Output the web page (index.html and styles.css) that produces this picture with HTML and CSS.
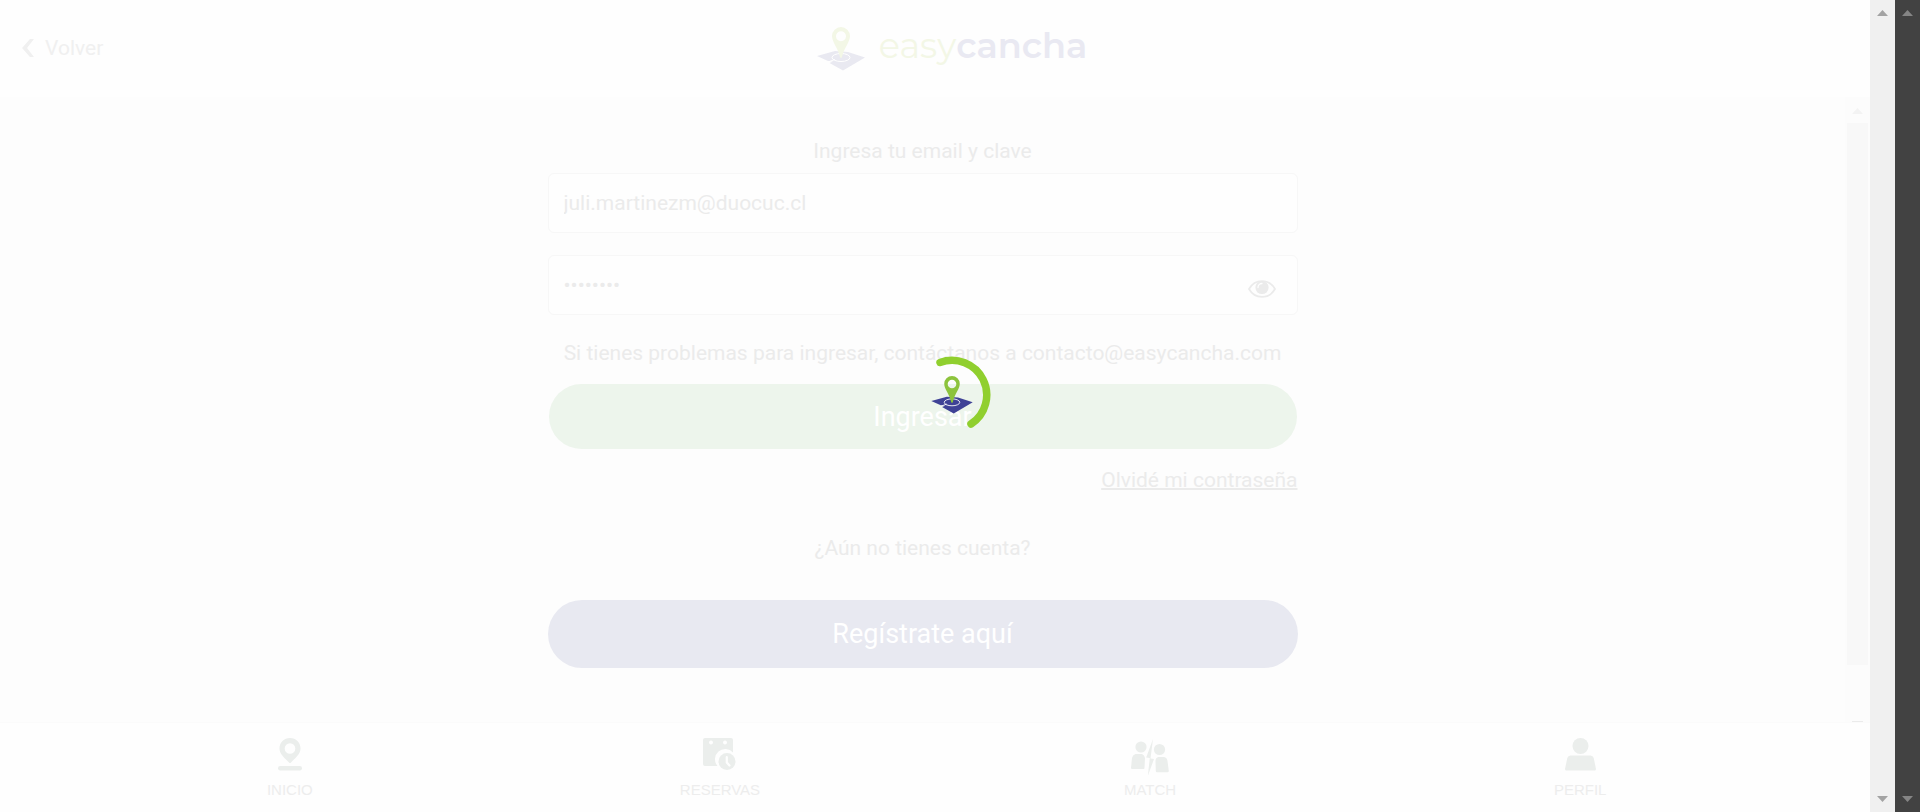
FILE: index.html
```html
<!DOCTYPE html>
<html lang="es">
<head>
<meta charset="utf-8">
<title>easycancha</title>
<link rel="stylesheet" href="styles.css">
</head>
<body>
<svg class="defs" aria-hidden="true">
  <symbol id="mark" viewBox="0 0 48 44">
    <path class="mark-map" d="M0 29 18 24 31 25 48 30.500 26 43.500 12.500 36 16 34.500 11 34Z"/>
    <path class="mark-line" d="M11 35 18 32.500M33 30.500a9 4 0 1 1-18 0 9 4 0 1 1 18 0"/>
    <path class="mark-pin" fill-rule="evenodd" d="M24 0a9 9 0 0 0-9 9c0 6 6 12 8 21q1 2 2 0c2-9 8-15 8-21a9 9 0 0 0-9-9Zm0 4.200a5 5 0 1 1 0 10 5 5 0 0 1 0-10Z"/>
  </symbol>
</svg>
<div class="window">
  <div class="app">
    <header class="header">
      <button class="back" type="button">
        <svg width="12" height="18" viewBox="0 0 12 18"><path d="M8 0h4L5 9l7 9H8L0 9Z"/></svg>
        <span>Volver</span>
      </button>
      <div class="logo">
        <svg class="mark faded" width="48" height="44"><use href="#mark"/></svg>
        <span class="wordmark"><span class="easy">easy</span><span class="cancha">cancha</span></span>
      </div>
    </header>
    <div class="body">
      <main class="content">
        <form class="form">
          <label class="label" for="email">Ingresa tu email y clave</label>
          <input class="field" id="email" type="email" value="juli.martinezm@duocuc.cl">
          <div class="password">
            <input class="field" type="password" value="12345678" aria-label="Clave">
            <button class="eye" type="button" aria-label="Mostrar clave">
              <svg width="28" height="18" viewBox="0 0 28 18"><path d="M1 9C7-1.500 21-1.500 27 9 21 19.500 7 19.500 1 9Z" fill="none" stroke="currentColor" stroke-width="1.800"/><circle cx="14" cy="7.500" r="6.600" fill="currentColor"/><path d="M10 7.500a4 4 0 0 1 4-4" fill="none" stroke="#fefefe" stroke-width="1.300" stroke-linecap="round"/></svg>
            </button>
          </div>
          <p class="help">Si tienes problemas para ingresar, contáctanos a contacto@easycancha.com</p>
          <button class="btn enter" type="button">Ingresar</button>
          <a class="forgot" href="#">Olvidé mi contraseña</a>
          <p class="question">¿Aún no tienes cuenta?</p>
          <button class="btn register" type="button">Regístrate aquí</button>
        </form>
      </main>
      <div class="bar bar-inner" aria-hidden="true">
        <svg width="11" height="6" viewBox="0 0 11 6"><path d="M5.500 0 11 6H0Z"/></svg>
        <div class="track"><div class="thumb"></div></div>
        <div class="dash"></div>
      </div>
    </div>
    <nav class="nav">
      <a class="tab" href="#">
        <svg width="24" height="33" viewBox="0 0 24 33"><path fill-rule="evenodd" d="M12 0C6 0 1.500 4.500 1.500 10.500c0 6 6 10 9.500 14q1 1 2 0c3.500-4 9.500-8 9.500-14C22.500 4.500 18 0 12 0Zm0 5.200a5.300 5.300 0 1 1 0 10.600 5.300 5.300 0 0 1 0-10.600Z"/><rect y="28" width="24" height="4.500" rx="2.200"/></svg>
        <span>INICIO</span>
      </a>
      <a class="tab" href="#">
        <svg width="33" height="33" viewBox="0 0 33 33"><path fill-rule="evenodd" d="M2 0h26a2 2 0 0 1 2 2v12.500A10 10 0 0 0 14.500 28H2a2 2 0 0 1-2-2V2A2 2 0 0 1 2 0Zm6 2.500a2 2 0 1 0 0 4 2 2 0 0 0 0-4Zm14 0a2 2 0 1 0 0 4 2 2 0 0 0 0-4Z"/><circle cx="24" cy="23.500" r="10" fill="#fefefe"/><circle cx="24" cy="23.500" r="8.500"/><path d="M23.800 19v5.500l2.700 3" fill="none" stroke="#fefefe" stroke-width="2.200" stroke-linecap="round"/></svg>
        <span>RESERVAS</span>
      </a>
      <a class="tab" href="#">
        <svg width="38" height="37" viewBox="0 0 38 37" class="tall"><circle cx="10" cy="9" r="5.600"/><path d="M4.500 16h6.500q2.500 1 3 4l-.5 10q0 1-1 1H1q-1 0-1-1l1-10q.5-3 3.500-4Z"/><circle cx="28.500" cy="11.500" r="5.600"/><path d="M27.500 19H33q3 .5 3.500 4l1.300 10q0 1.200-1.300 1.200H26q-1.200 0-1.200-1.200L24.500 23q0-3.500 3-4ZM22 1l-6.800 18.500 3.600.5-2 18L23 21l-3.500-.5Z"/></svg>
        <span>MATCH</span>
      </a>
      <a class="tab" href="#">
        <svg width="31" height="33" viewBox="0 0 31 33"><circle cx="15.500" cy="8" r="8"/><path d="M5.500 17.500h20q2.500 0 3.200 2.500L31 31q0 1.500-1.500 1.500h-28Q0 32.500 0 31l2.300-11q.7-2.500 3.200-2.500Z"/></svg>
        <span>PERFIL</span>
      </a>
    </nav>
  </div>
  <div class="bar bar-light" aria-hidden="true">
    <svg width="11" height="6" viewBox="0 0 11 6"><path d="M5.500 0 11 6H0Z"/></svg>
    <svg width="11" height="6" viewBox="0 0 11 6"><path d="M0 0h11L5.500 6Z"/></svg>
  </div>
  <div class="bar bar-dark" aria-hidden="true">
    <svg width="11" height="6" viewBox="0 0 11 6"><path d="M5.500 0 11 6H0Z"/></svg>
    <svg width="11" height="6" viewBox="0 0 11 6"><path d="M0 0h11L5.500 6Z"/></svg>
  </div>
  <div class="loader" role="status" aria-label="Cargando">
    <svg class="ring" width="78" height="78" viewBox="-39 -39 78 78"><path d="M-12-32.600A34.700 34.700 0 0 1 19 29" fill="none" stroke="#90cf2e" stroke-width="7.500" stroke-linecap="round"/></svg>
    <svg class="mark loader-mark" width="42" height="38"><use href="#mark"/></svg>
  </div>
</div>
</body>
</html>
```
FILE: styles.css
```css
* { box-sizing: border-box; }

body {
  margin: 0;
  font-family: Roboto, "Liberation Sans", sans-serif;
  font-size: 21px;
  line-height: 24px;
  color: #ebebeb;
  background: #fefefe;
}

button { font: inherit; color: inherit; border: 0; padding: 0; background: none; }
a { color: inherit; text-decoration: none; }
p { margin: 0; }
svg { display: block; fill: currentColor; }
.defs { position: absolute; width: 0; height: 0; }

.window { position: relative; display: flex; height: 100vh; }
.app { flex: 1; min-width: 0; display: flex; flex-direction: column; }

.header {
  display: grid;
  grid-template-columns: 1fr auto 1fr;
  align-items: center;
  height: 97px;
  padding: 0 22px;
}
.back { display: flex; align-items: center; gap: 11px; justify-self: start; padding-bottom: 2px; color: #f0f0f0; }
.logo { grid-column: 2; display: flex; align-items: center; gap: 14px; padding-left: 34px; }
.wordmark { font-family: Montserrat, Lato, sans-serif; font-size: 35px; line-height: 40px; padding-bottom: 5px; }
.easy { color: #f3f7e6; font-weight: 400; }
.cancha { color: #e9e9f2; font-weight: 600; }

.mark-map { fill: var(--map); }
.mark-pin { fill: var(--pin); }
.mark-line { fill: none; stroke: #ffffff; stroke-width: 1; }
.mark { --map: #3f4296; --pin: #8cc33c; }
.faded { --map: #e9e9f1; --pin: #f3f7e6; }

.body { flex: 1; min-height: 0; display: flex; background: #fdfdfd; }
.content { flex: 1; min-width: 0; overflow: hidden; padding: 42px 16px 0; }
.form { display: flex; flex-direction: column; max-width: 750px; margin: 0 auto; text-align: center; }
.label { margin-bottom: 10px; }
.field {
  width: 100%;
  height: 60px;
  padding: 0 15px;
  border: 1px solid #f7f7f7;
  border-radius: 6px;
  background: #fefefe;
  color: #ebebeb;
  font: inherit;
}
.password { position: relative; margin: 22px 0 26px; }
.password .field { display: block; }
.eye { position: absolute; right: 22px; top: 25px; }
.btn { border-radius: 34px; color: #ffffff; font-size: 27px; line-height: 32px; }
.enter { height: 65px; margin: 19px 1px 19px; background: #edf5ec; }
.forgot { align-self: flex-end; text-decoration: underline; text-decoration-thickness: 2px; }
.question { margin: 44px 0 40px; }
.register { height: 68px; background: #e8e9f1; }

.nav {
  display: flex;
  height: 90px;
  padding: 15px 4% 0;
  border-top: 1px solid #fbfbfb;
  color: #ebeeec;
}
.tab { flex: 1; display: flex; flex-direction: column; align-items: center; gap: 10px; }
.tab span { font: 15px/18px "Liberation Sans", Arial, sans-serif; color: #ededed; }
.tall { margin-bottom: -4px; }

.bar { display: flex; flex-direction: column; align-items: center; justify-content: space-between; width: 25px; padding: 10px 0; }
.bar-light { background: #f0f0f0; color: #a3a3a3; }
.bar-dark { background: #424242; color: #858585; }
.bar-inner { background: #fcfcfc; color: #f3f3f3; padding: 11px 2px 0; gap: 9px; }
.track { flex: 1; width: 100%; }
.thumb { height: 92%; background: #f8f8f8; }
.dash { width: 11px; height: 1px; background: #ebebeb; }

.loader { position: absolute; left: 50%; top: 50%; translate: -47px -50px; display: grid; place-items: center; }
.ring, .loader-mark { grid-area: 1 / 1; }
```
